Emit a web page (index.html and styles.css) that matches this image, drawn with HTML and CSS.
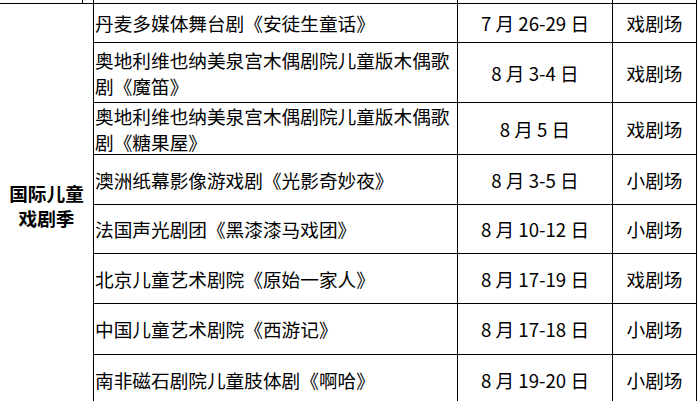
FILE: index.html
```html
<!DOCTYPE html>
<html lang="zh-CN">
<head>
<meta charset="utf-8">
<title>国际儿童戏剧季</title>
<link rel="stylesheet" href="styles.css">
</head>
<body>
<div class="page">
  <div class="prev">
    <span class="p1"></span><span class="p2"></span><span class="p3"></span><span class="p4"></span><span class="p5"></span>
  </div>
  <div class="grid">
    <div class="cell season"><span>国际儿童</span><span>戏剧季</span></div>

    <div class="cell name">丹麦多媒体舞台剧《安徒生童话》</div>
    <div class="cell date">7 月 26-29 日</div>
    <div class="cell venue">戏剧场</div>

    <div class="cell name">奥地利维也纳美泉宫木偶剧院儿童版木偶歌剧《魔笛》</div>
    <div class="cell date">8 月 3-4 日</div>
    <div class="cell venue">戏剧场</div>

    <div class="cell name">奥地利维也纳美泉宫木偶剧院儿童版木偶歌剧《糖果屋》</div>
    <div class="cell date">8 月 5 日</div>
    <div class="cell venue">戏剧场</div>

    <div class="cell name">澳洲纸幕影像游戏剧《光影奇妙夜》</div>
    <div class="cell date">8 月 3-5 日</div>
    <div class="cell venue">小剧场</div>

    <div class="cell name">法国声光剧团《黑漆漆马戏团》</div>
    <div class="cell date">8 月 10-12 日</div>
    <div class="cell venue">小剧场</div>

    <div class="cell name">北京儿童艺术剧院《原始一家人》</div>
    <div class="cell date">8 月 17-19 日</div>
    <div class="cell venue">戏剧场</div>

    <div class="cell name">中国儿童艺术剧院《西游记》</div>
    <div class="cell date">8 月 17-18 日</div>
    <div class="cell venue">小剧场</div>

    <div class="cell name">南非磁石剧院儿童肢体剧《啊哈》</div>
    <div class="cell date">8 月 19-20 日</div>
    <div class="cell venue">小剧场</div>
  </div>
</div>
</body>
</html>
```
FILE: styles.css
```css
html, body {
  margin: 0;
  padding: 0;
  background: #fff;
}

body {
  font-family: "Noto Sans CJK SC", sans-serif;
  font-size: 18.67px;
  line-height: 26px;
  color: #000;
  overflow: hidden;
}

.page {
  width: 700px;
}

.prev {
  display: flex;
  height: 3px;
  width: 697px;
  border-bottom: 1px solid #000;
}

.prev span {
  border-right: 1px solid #000;
}

.prev .p1 { width: 82px; }
.prev .p2 { width: 10px; }
.prev .p3 { width: 363px; }
.prev .p4 { width: 154px; }
.prev .p5 { width: 83px; }

.grid {
  display: grid;
  width: 697px;
  box-sizing: border-box;
  padding-right: 1px;
  background: #000;
  gap: 1px;
  grid-template-columns: 93px 363px 154px 83px;
  grid-template-rows: 38px 59px 51px 49px 48px 49px 50px 50px;
}

.cell {
  background: #fff;
  display: flex;
  align-items: center;
  font-weight: 400;
}

.season {
  grid-row: 1 / span 8;
  flex-direction: column;
  justify-content: center;
  font-weight: 700;
  line-height: 25px;
}

.season span {
  display: block;
}

.name {
  padding-left: 1px;
}

.date,
.venue {
  justify-content: center;
}
```
